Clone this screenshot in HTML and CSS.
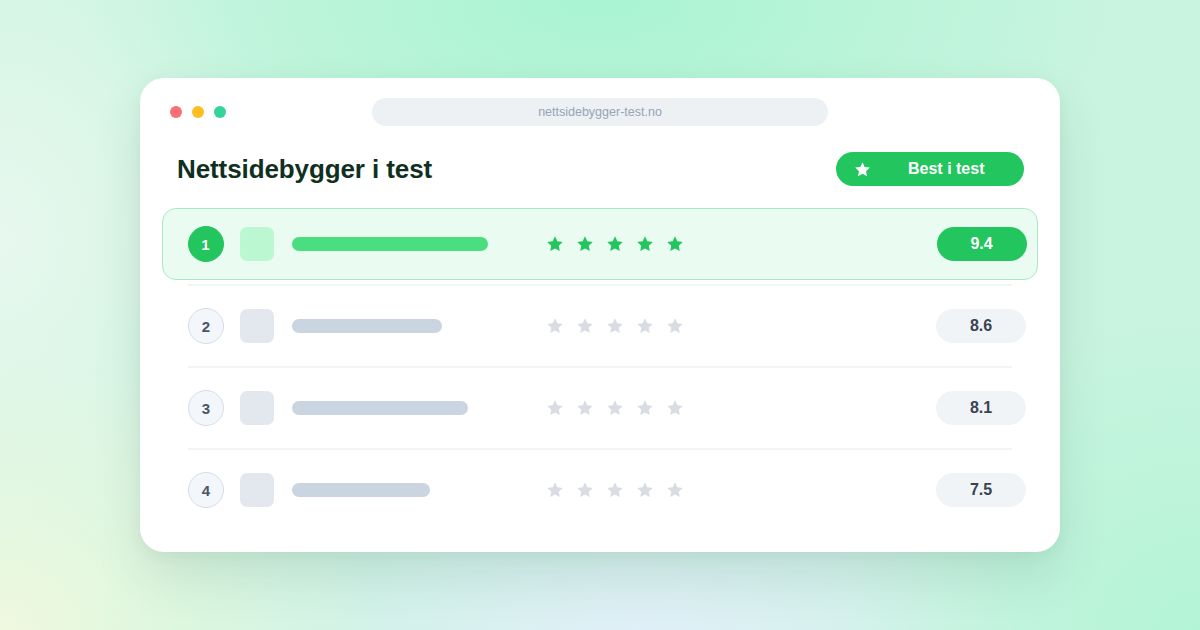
FILE: index.html
```html
<!DOCTYPE html>
<html lang="no">
<head>
<meta charset="utf-8">
<title>Nettsidebygger i test</title>
<link rel="stylesheet" href="styles.css">
</head>
<body>
<main class="stage">
  <section class="window">
    <div class="chrome">
      <div class="dots">
        <span class="dot dot-red"></span>
        <span class="dot dot-yellow"></span>
        <span class="dot dot-green"></span>
      </div>
      <div class="url">nettsidebygger-test.no</div>
    </div>

    <header class="head">
      <h1 class="title">Nettsidebygger i test</h1>
      <div class="badge">
        <svg class="badge-star" viewBox="0 0 24 24"><path d="M12 1.8l3.1 6.6 7.2.9-5.3 5 1.4 7.1L12 17.9l-6.4 3.5 1.4-7.1-5.3-5 7.2-.9z"/></svg>
        <span class="badge-text">Best i test</span>
      </div>
    </header>

    <ol class="list">
      <li class="row row-top">
        <span class="rank">1</span>
        <span class="logo"></span>
        <span class="name"><span class="bar" style="width:196px"></span></span>
        <span class="stars">
          <svg viewBox="0 0 24 24"><path d="M12 1.8l3.1 6.6 7.2.9-5.3 5 1.4 7.1L12 17.9l-6.4 3.5 1.4-7.1-5.3-5 7.2-.9z"/></svg>
          <svg viewBox="0 0 24 24"><path d="M12 1.8l3.1 6.6 7.2.9-5.3 5 1.4 7.1L12 17.9l-6.4 3.5 1.4-7.1-5.3-5 7.2-.9z"/></svg>
          <svg viewBox="0 0 24 24"><path d="M12 1.8l3.1 6.6 7.2.9-5.3 5 1.4 7.1L12 17.9l-6.4 3.5 1.4-7.1-5.3-5 7.2-.9z"/></svg>
          <svg viewBox="0 0 24 24"><path d="M12 1.8l3.1 6.6 7.2.9-5.3 5 1.4 7.1L12 17.9l-6.4 3.5 1.4-7.1-5.3-5 7.2-.9z"/></svg>
          <svg viewBox="0 0 24 24"><path d="M12 1.8l3.1 6.6 7.2.9-5.3 5 1.4 7.1L12 17.9l-6.4 3.5 1.4-7.1-5.3-5 7.2-.9z"/></svg>
        </span>
        <span class="score">9.4</span>
      </li>
      <li class="row">
        <span class="rank">2</span>
        <span class="logo"></span>
        <span class="name"><span class="bar" style="width:150px"></span></span>
        <span class="stars">
          <svg viewBox="0 0 24 24"><path d="M12 1.8l3.1 6.6 7.2.9-5.3 5 1.4 7.1L12 17.9l-6.4 3.5 1.4-7.1-5.3-5 7.2-.9z"/></svg>
          <svg viewBox="0 0 24 24"><path d="M12 1.8l3.1 6.6 7.2.9-5.3 5 1.4 7.1L12 17.9l-6.4 3.5 1.4-7.1-5.3-5 7.2-.9z"/></svg>
          <svg viewBox="0 0 24 24"><path d="M12 1.8l3.1 6.6 7.2.9-5.3 5 1.4 7.1L12 17.9l-6.4 3.5 1.4-7.1-5.3-5 7.2-.9z"/></svg>
          <svg viewBox="0 0 24 24"><path d="M12 1.8l3.1 6.6 7.2.9-5.3 5 1.4 7.1L12 17.9l-6.4 3.5 1.4-7.1-5.3-5 7.2-.9z"/></svg>
          <svg viewBox="0 0 24 24"><path d="M12 1.8l3.1 6.6 7.2.9-5.3 5 1.4 7.1L12 17.9l-6.4 3.5 1.4-7.1-5.3-5 7.2-.9z"/></svg>
        </span>
        <span class="score">8.6</span>
      </li>
      <li class="row">
        <span class="rank">3</span>
        <span class="logo"></span>
        <span class="name"><span class="bar" style="width:176px"></span></span>
        <span class="stars">
          <svg viewBox="0 0 24 24"><path d="M12 1.8l3.1 6.6 7.2.9-5.3 5 1.4 7.1L12 17.9l-6.4 3.5 1.4-7.1-5.3-5 7.2-.9z"/></svg>
          <svg viewBox="0 0 24 24"><path d="M12 1.8l3.1 6.6 7.2.9-5.3 5 1.4 7.1L12 17.9l-6.4 3.5 1.4-7.1-5.3-5 7.2-.9z"/></svg>
          <svg viewBox="0 0 24 24"><path d="M12 1.8l3.1 6.6 7.2.9-5.3 5 1.4 7.1L12 17.9l-6.4 3.5 1.4-7.1-5.3-5 7.2-.9z"/></svg>
          <svg viewBox="0 0 24 24"><path d="M12 1.8l3.1 6.6 7.2.9-5.3 5 1.4 7.1L12 17.9l-6.4 3.5 1.4-7.1-5.3-5 7.2-.9z"/></svg>
          <svg viewBox="0 0 24 24"><path d="M12 1.8l3.1 6.6 7.2.9-5.3 5 1.4 7.1L12 17.9l-6.4 3.5 1.4-7.1-5.3-5 7.2-.9z"/></svg>
        </span>
        <span class="score">8.1</span>
      </li>
      <li class="row">
        <span class="rank">4</span>
        <span class="logo"></span>
        <span class="name"><span class="bar" style="width:138px"></span></span>
        <span class="stars">
          <svg viewBox="0 0 24 24"><path d="M12 1.8l3.1 6.6 7.2.9-5.3 5 1.4 7.1L12 17.9l-6.4 3.5 1.4-7.1-5.3-5 7.2-.9z"/></svg>
          <svg viewBox="0 0 24 24"><path d="M12 1.8l3.1 6.6 7.2.9-5.3 5 1.4 7.1L12 17.9l-6.4 3.5 1.4-7.1-5.3-5 7.2-.9z"/></svg>
          <svg viewBox="0 0 24 24"><path d="M12 1.8l3.1 6.6 7.2.9-5.3 5 1.4 7.1L12 17.9l-6.4 3.5 1.4-7.1-5.3-5 7.2-.9z"/></svg>
          <svg viewBox="0 0 24 24"><path d="M12 1.8l3.1 6.6 7.2.9-5.3 5 1.4 7.1L12 17.9l-6.4 3.5 1.4-7.1-5.3-5 7.2-.9z"/></svg>
          <svg viewBox="0 0 24 24"><path d="M12 1.8l3.1 6.6 7.2.9-5.3 5 1.4 7.1L12 17.9l-6.4 3.5 1.4-7.1-5.3-5 7.2-.9z"/></svg>
        </span>
        <span class="score">7.5</span>
      </li>
    </ol>
  </section>
</main>
</body>
</html>
```

FILE: styles.css
```css
* {
  box-sizing: border-box;
}

html,
body {
  margin: 0;
  padding: 0;
}

body {
  width: 1200px;
  height: 630px;
  overflow: hidden;
  font-family: "Liberation Sans", Arial, sans-serif;
  background:
    radial-gradient(ellipse 520px 260px at 600px 0px, #a9f4d2 0%, rgba(169, 244, 210, 0) 100%),
    radial-gradient(ellipse 360px 320px at 1200px 630px, #b4f4d6 0%, rgba(180, 244, 214, 0) 100%),
    radial-gradient(ellipse 380px 300px at 0px 630px, #eff9df 0%, rgba(239, 249, 223, 0) 100%),
    radial-gradient(ellipse 460px 160px at 640px 630px, #e0eff8 0%, rgba(224, 239, 248, 0) 100%),
    radial-gradient(ellipse 320px 420px at 0px 240px, #e8f8ee 0%, rgba(232, 248, 238, 0) 100%),
    #c9f4df;
}

.stage {
  height: 630px;
  padding-top: 78px;
  display: flex;
  justify-content: center;
  align-items: flex-start;
}

/* browser window card */
.window {
  width: 920px;
  height: 474px;
  background: #ffffff;
  border-radius: 24px;
  box-shadow: 0 24px 50px rgba(40, 80, 70, 0.12), 0 4px 14px rgba(40, 80, 70, 0.05);
  padding: 20px 22px 0;
}

.chrome {
  display: flex;
  align-items: center;
  height: 28px;
}

.dots {
  display: flex;
  gap: 10px;
  padding-left: 8px;
  width: 210px;
}

.dot {
  width: 12px;
  height: 12px;
  border-radius: 50%;
}

.dot-red { background: #f87171; }
.dot-yellow { background: #fbbf24; }
.dot-green { background: #34d399; }

.url {
  width: 456px;
  height: 28px;
  border-radius: 14px;
  background: #eef1f4;
  color: #97a3b6;
  font-size: 12.5px;
  display: flex;
  align-items: center;
  justify-content: center;
}

.head {
  display: flex;
  align-items: center;
  justify-content: space-between;
  height: 34px;
  margin-top: 26px;
  padding: 0 14px 0 15px;
}

.title {
  margin: 0;
  font-size: 26px;
  font-weight: 700;
  color: #10301f;
  letter-spacing: -0.1px;
}

.badge {
  width: 188px;
  height: 34px;
  border-radius: 17px;
  background: #22c55e;
  color: #ffffff;
  display: flex;
  align-items: center;
  padding-left: 18px;
}

.badge-star {
  width: 17px;
  height: 17px;
  fill: #ffffff;
}

.badge-text {
  margin-left: 37px;
  font-size: 16px;
  font-weight: 700;
}

/* ranking list */
.list {
  list-style: none;
  margin: 22px 0 0;
  padding: 0;
}

.row {
  height: 72px;
  display: flex;
  align-items: center;
  padding: 0 12px 0 26px;
  border-radius: 14px;
  position: relative;
  margin-bottom: 10px;
}

.row + .row::before {
  content: "";
  position: absolute;
  left: 26px;
  right: 26px;
  top: -6px;
  height: 2px;
  background: #f2f4f6;
}

.row-top {
  background: #eafcf2;
  border: 1.5px solid #a9e9c3;
  padding-left: 24.5px;
  padding-right: 10.5px;
}

.rank {
  width: 36px;
  height: 36px;
  border-radius: 50%;
  flex: none;
  display: flex;
  align-items: center;
  justify-content: center;
  font-size: 15px;
  font-weight: 700;
  background: #f3f6fa;
  border: 1.5px solid #d8dde4;
  color: #4a5568;
}

.row-top .rank {
  background: #22c55e;
  border-color: #22c55e;
  color: #ffffff;
}

.logo {
  width: 34px;
  height: 34px;
  border-radius: 7px;
  background: #e3e8ef;
  margin-left: 16px;
  flex: none;
}

.row-top .logo {
  background: #bbf7d0;
}

.name {
  width: 254px;
  margin-left: 18px;
  display: flex;
}

.bar {
  height: 14px;
  border-radius: 7px;
  background: #cbd5e1;
}

.row-top .bar {
  background: #4ade80;
}

.stars {
  display: flex;
  gap: 12px;
  flex: 1;
}

.stars svg {
  width: 18px;
  height: 18px;
  fill: #d9dce2;
}

.row-top .stars svg {
  fill: #22c55e;
}

.score {
  width: 90px;
  height: 34px;
  border-radius: 17px;
  background: #f1f4f7;
  color: #3a4352;
  font-size: 16px;
  font-weight: 700;
  display: flex;
  align-items: center;
  justify-content: center;
  flex: none;
}

.row-top .score {
  background: #22c55e;
  color: #ffffff;
}
```
